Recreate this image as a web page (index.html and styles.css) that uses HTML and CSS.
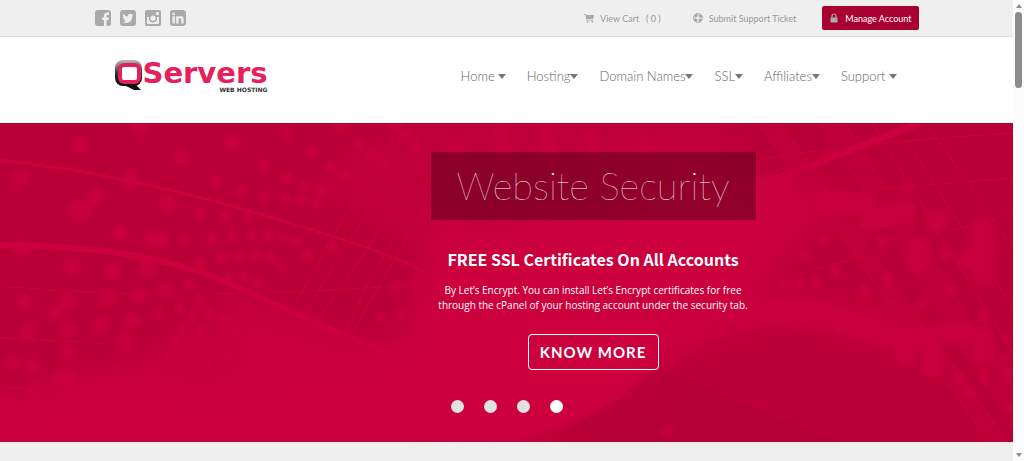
FILE: index.html
```html
<!DOCTYPE html>
<html lang="en">
<head>
  <meta charset="utf-8">
  <title>QServers Web Hosting</title>
  <link rel="stylesheet" href="styles.css">
</head>
<body>
  <div class="page">
    <div class="topbar">
      <div class="container topbar-inner">
        <div class="social">
          <a href="#" aria-label="Facebook">
            <svg viewBox="0 0 16 16"><rect width="16" height="16" rx="3" fill="#aaa"/><path d="M9 16V10H7V7.600h2V6c0-2.300 1.200-3.500 3.200-3.500h1.800v2.400h-1.200c-.9 0-1.200.4-1.200 1.200v1.500H14L13.600 10h-2v6z" fill="#efefef"/></svg>
          </a>
          <a href="#" aria-label="Twitter">
            <svg viewBox="0 0 16 16"><rect width="16" height="16" rx="3" fill="#aaa"/><path d="M13.500 4.700l-1.200.4.9-1.200-1.400.5a2.300 2.300 0 0 0-3.900 2.100C6 6.400 4.400 5.500 3.200 4.100c-.6 1.100-.3 2.400.7 3.100l-1-.3c0 1.100.8 2 1.800 2.300l-1 .1c.3.900 1.100 1.500 2.100 1.600-1 .8-2.100 1.100-3.300 1 4.800 2.700 9.900-.5 9.800-6z" fill="#efefef"/></svg>
          </a>
          <a href="#" aria-label="Instagram">
            <svg viewBox="0 0 16 16"><rect width="16" height="16" rx="2" fill="#aaa"/><path d="M2 7h2.300a4 4 0 1 0 7.400 0H14v6.200c0 .5-.3.800-.8.800H2.800c-.5 0-.8-.3-.8-.8z" fill="#efefef"/><circle cx="8" cy="8.200" r="3.900" fill="#aaa"/><circle cx="8" cy="8.200" r="2.600" fill="#efefef"/><rect x="11" y="2" width="3" height="3" rx=".6" fill="#efefef"/></svg>
          </a>
          <a href="#" aria-label="LinkedIn">
            <svg viewBox="0 0 16 16"><rect width="16" height="16" rx="3" fill="#aaa"/><circle cx="3.700" cy="3.900" r="1.300" fill="#efefef"/><path d="M2.500 6.200h2.400v7.200H2.500zM6.200 6.200h2.400v1c1.200-1.800 5-1.500 5 2v4.200h-2.400V9.600c0-2-2.600-1.900-2.600 0v3.800H6.200z" fill="#efefef"/></svg>
          </a>
        </div>
        <div class="tools">
          <a class="tool" href="#">
            <svg viewBox="0 0 10 10"><path d="M0 1h1.900l.3 1H10L9.200 6H3.200l.2.800H9v.8H2.600L1.300 1.800H0z"/><circle cx="3.500" cy="8.700" r=".9"/><circle cx="8.300" cy="8.700" r=".9"/></svg>
            <span>View Cart &nbsp; ( 0 )</span>
          </a>
          <a class="tool" href="#">
            <svg viewBox="0 0 10 10"><circle cx="5" cy="5" r="3.400" fill="none" stroke="#aaa" stroke-width="2.600" stroke-dasharray="3.200 2.140" stroke-dashoffset="-1.100"/><circle cx="5" cy="5" r="4.500" fill="none" stroke="#aaa" stroke-width=".9"/><circle cx="5" cy="5" r="2.300" fill="none" stroke="#aaa" stroke-width=".8"/></svg>
            <span>Submit Support Ticket</span>
          </a>
          <a class="manage" href="#">
            <svg viewBox="0 0 10 10"><rect x="1.500" y="4.500" width="7" height="5" rx=".5"/><path d="M3 5V3a2 2 0 0 1 4 0v2" fill="none" stroke="#aaa" stroke-width="1.200"/></svg>
            <span>Manage Account</span>
          </a>
        </div>
      </div>
    </div>

    <header class="header">
      <div class="container header-inner">
        <a class="logo" href="#" aria-label="QServers Web Hosting">
          <svg class="logo-mark" viewBox="0 0 28 31">
            <defs>
              <linearGradient id="shade" x1="0" y1="0" x2="0" y2="1">
                <stop offset="0" stop-color="#bbb"/>
                <stop offset=".5" stop-color="#333"/>
                <stop offset="1" stop-color="#000"/>
              </linearGradient>
            </defs>
            <rect width="27" height="26" rx="8" fill="url(#shade)"/>
            <path d="M9 25h12l5 5H19z" fill="#111"/>
            <rect x="5" y="5" width="19" height="17" rx="4" fill="#fff" stroke="#e5205a" stroke-width="4"/>
          </svg>
          <span class="logo-text">
            <span class="logo-name">Servers</span>
            <span class="logo-sub">WEB HOSTING</span>
          </span>
        </a>
        <nav class="nav">
          <a href="#">Home <i class="caret spaced"></i></a>
          <a href="#">Hosting<i class="caret"></i></a>
          <a href="#">Domain Names<i class="caret"></i></a>
          <a href="#">SSL<i class="caret"></i></a>
          <a href="#">Affiliates<i class="caret"></i></a>
          <a href="#">Support <i class="caret spaced"></i></a>
        </nav>
      </div>
    </header>

    <section class="hero">
      <svg class="hero-bg" viewBox="0 0 1013 319" preserveAspectRatio="xMidYMid slice" aria-hidden="true">
        <defs>
          <filter id="soft" x="-20%" y="-20%" width="140%" height="140%"><feGaussianBlur stdDeviation="2"/></filter>
          <filter id="softer" x="-20%" y="-20%" width="140%" height="140%"><feGaussianBlur stdDeviation="14"/></filter>
        </defs>
        <rect width="1013" height="319" fill="#b90036"/>
        <!-- bright middle and lower left -->
        <g fill="#cb003c" filter="url(#softer)">
          <path d="M-40 290L60 255 130 240 200 262 290 245 400 215 420 150 430 90 480 105 620 80 640 30 740 50 850 75 800 120 760 165 740 215 700 230 660 270 560 340-40 360z"/>
          <path d="M740 170L850 180 930 205 900 222 800 205 740 215z"/>
          <path d="M240 172L390 230 420 250 200 280 130 240z" opacity=".7"/>
          <path d="M300 60L420-10H720L760 60 640 90 400 120z" opacity=".4"/>
          <path d="M235 165C300 190 350 215 390 232L430 210V319H240z" opacity=".5"/>
        </g>
        <path d="M700 205C760 195 810 205 860 222C930 260 960 300 975 319H520L640 270C670 245 690 225 740 208z" fill="#b90036" opacity=".55" filter="url(#soft)"/>
        <path d="M660 240L740 280 840 319H545L620 275z" fill="#b20034" opacity=".5"/>
        <path d="M640 235L740 281 840 319H990L905 222 740 205z" fill="#c1003a" opacity=".25"/>
        <!-- light bands -->
        <g fill="none" stroke="#cb003c">
          <path d="M0 37Q120 50 260 91T430 152" stroke-width="3"/>
          <path d="M0 122Q150 122 240 165T390 230" stroke-width="6"/>
          <path d="M0 163Q130 175 260 170T430 160M0 215Q160 225 330 221T430 212M0 265H330" stroke-width="1"/>
          <path d="M403 0Q330 110 260 250M425 8Q350 110 300 200M428 30Q350 160 240 300M430 55Q370 150 340 220M430 75L352 210" stroke-width="2" opacity=".6"/>
          <path d="M760 62L920 0" stroke-width="7"/>
          <path d="M740 40Q850 20 1013 10M740 15L775 0M760 160L850 137 1013 90M890 170Q950 155 1013 120M880 66L1013 55M740 65Q800 35 840 28" stroke-width="1"/>
          <path d="M758 0L990 319M780 0L1008 319M820 0L1013 305M845 0L1013 265M872 0L1013 230M905 15L1013 185M930 5L1013 125" stroke-width="2" opacity=".5"/>
        </g>
        <path d="M758 0H780L1008 319H988z" fill="#cb003c" opacity=".3"/>
        <path d="M820 0H845L1013 265V305z" fill="#cb003c" opacity=".2"/>
        <!-- glowing dots -->
        <g fill="none" stroke="#cb003c" stroke-linecap="round" filter="url(#soft)" opacity=".85">
          <path stroke-width="17" d="M80 23h0M21 55h0M140 3h0M182 34h0M233 20h0M130 56h0M77 87h8M95 74h0M120 110h0M153 117h8M167 81h0M72 144h0M113 148h0M22 125h0M147 145h0M25 179h0M68 179h0M108 175h0M138 172h0M166 168h0M102 202h0M132 198h0M68 207h0M27 209h0M67 229h0M125 219h0M55 190h0M12 240h0M32 243h0M35 270h0M8 280h0M33 300h0M60 255h8"/>
          <path stroke-width="12" d="M263 42h0M215 58h0M242 68h0M265 74h0M285 75h0M302 77h0M316 80h0M286 55h0M305 63h0M321 67h0M287 10h0M312 30h0M330 44h0M345 52h0M358 20h0M373 32h0M385 42h0M340 4h0M405 12h0M417 24h0M395 2h0M200 90h0M226 93h0M248 93h0M185 117h0M211 115h0M233 113h0M252 112h0M269 112h0M283 115h0M296 119h0M200 139h0M221 135h0M239 134h0M255 134h0M270 135h0M282 144h0M307 132h0M332 123h0M243 153h0M258 160h0M228 154h0M189 162h0M199 178h0M180 185h0M192 193h0M208 190h0M223 198h0M200 208h0M183 205h0M177 219h0M192 226h0M214 220h0M237 210h0M158 191h0M170 233h0M207 240h0M228 234h0M184 245h0M249 230h0M380 195h0M400 192h0M422 190h0M396 164h0M418 162h0M432 92h0M458 91h0M483 91h0M507 91h0M532 90h0M557 92h0M583 95h0"/>
          <path stroke-width="13" d="M908 64h0M778 87h0M823 117h0M805 133h0M775 124h0M835 148h0M816 159h0M799 161h0M783 162h0M882 119h0M887 156h0M865 168h0M922 180h0M950 167h0M946 131h0M983 194h0M970 270h0M667 308h0M984 255h0M1008 250h0M958 256h0"/>
          <path stroke-width="22" d="M937 99h0M918 125v15M983 105v45M970 135h0M870 98L905 88M760 65h28M825 80h40M950 210h16M983 215v15M932 230v15M905 232h0M880 208h0"/>
          <path stroke-width="20" d="M745 195Q800 175 850 200T945 210"/>
          <path stroke-width="10" d="M700 212h0M722 209h0M740 206h0M757 202h0M775 199h0M795 200h0M815 203h0M840 207h0M865 213h0M1006 215h0M1005 235h0M1010 285h0"/>
          <path stroke-width="16" opacity=".5" d="M500 10L512 60M545 10L558 60M590 15L605 60M640 20L655 55M455 20L470 65"/>
        </g>
      </svg>
      <div class="container">
        <div class="slide">
          <h1>Website Security</h1>
          <h2>FREE SSL Certificates On All Accounts</h2>
          <p>By Let’s Encrypt. You can install Let’s Encrypt certificates for free through the cPanel of your hosting account under the security tab.</p>
          <a class="more" href="#">KNOW MORE</a>
          <div class="dots">
            <button type="button" aria-label="Slide 1"></button>
            <button type="button" aria-label="Slide 2"></button>
            <button type="button" aria-label="Slide 3"></button>
            <button type="button" class="active" aria-label="Slide 4"></button>
          </div>
        </div>
      </div>
    </section>
  </div>

  <div class="scrollbar" aria-hidden="true">
    <i class="arrow-up"></i>
    <i class="thumb"></i>
    <i class="arrow-down"></i>
  </div>
</body>
</html>
```
FILE: styles.css
```css
* {
  box-sizing: border-box;
  margin: 0;
  padding: 0;
}
body {
  display: flex;
  min-height: 100vh;
  background-color: #efefef;
  font-family: Lato, sans-serif;
}
a {
  color: inherit;
  text-decoration: none;
}
svg {
  display: block;
}
.page {
  flex: 1;
  min-width: 0;
}
.container {
  max-width: 824px;
  margin: 0 auto;
}

/* top bar */
.topbar {
  background-color: #efefef;
  border-bottom: 1px solid #ddd;
}
.topbar-inner {
  display: flex;
  justify-content: space-between;
  align-items: center;
  height: 36px;
}
.social {
  display: flex;
  gap: 9px;
}
.social svg {
  width: 16px;
  height: 16px;
}
.tools {
  display: flex;
  align-items: center;
  font-size: 9px;
  color: #999;
}
.tool {
  display: flex;
  align-items: center;
  gap: 6px;
  margin-right: 32px;
}
.tool + .manage {
  margin-left: -6px;
}
.tools svg {
  width: 10px;
  height: 10px;
  fill: #aaa;
}
.manage {
  display: flex;
  align-items: center;
  gap: 6px;
  height: 24px;
  padding: 0 7px;
  border-radius: 2px;
  background-color: #a80030;
  color: #fff;
}

/* header */
.header {
  background-color: #fff;
}
.header-inner {
  display: flex;
  justify-content: space-between;
  align-items: center;
  height: 86px;
  padding: 0 22px 8px 20px;
}
.logo {
  display: flex;
  align-items: flex-start;
}
.logo-mark {
  width: 28px;
  height: 31px;
}
.logo-text {
  display: flex;
  flex-direction: column;
  align-items: flex-end;
  font-family: "DejaVu Sans", sans-serif;
}
.logo-name {
  font-size: 29px;
  font-weight: bold;
  line-height: 27px;
  color: #e5205a;
}
.logo-sub {
  font-size: 6px;
  font-weight: bold;
  line-height: 6px;
  color: #333;
}
.nav {
  display: flex;
  gap: 21px;
  font-size: 13px;
  font-weight: 300;
  color: #666;
}
.nav a {
  display: flex;
  align-items: center;
}
.caret {
  border: 4px solid transparent;
  border-top: 5px solid #777;
  border-bottom: 0;
}
.caret.spaced {
  margin-left: 3px;
}

/* slider */
.hero {
  position: relative;
  padding: 29px 0;
  background-color: #cb003c;
  color: #fff;
}
.hero-bg {
  position: absolute;
  top: 0;
  left: 0;
  width: 100%;
  height: 100%;
}
.slide {
  position: relative;
  width: 325px;
  margin-left: 336px;
  text-align: center;
}
.slide h1 {
  padding-bottom: 2px;
  background-color: rgba(0, 0, 0, 0.28);
  font-size: 38px;
  font-weight: 100;
  line-height: 66px;
}
.slide h2 {
  margin-top: 27px;
  font-family: "Noto Sans CJK SC", sans-serif;
  font-size: 16px;
  font-weight: 700;
  line-height: 24px;
}
.slide p {
  margin-top: 12px;
  font-family: "Open Sans", sans-serif;
  font-size: 10px;
  line-height: 15px;
}
.more {
  display: block;
  width: 131px;
  margin: 21px auto 0;
  border: 1px solid #fff;
  border-radius: 4px;
  font-size: 15px;
  font-weight: 700;
  line-height: 34px;
  letter-spacing: 1px;
}
.dots {
  display: flex;
  gap: 20px;
  margin: 30px 0 0 20px;
}
.dots button {
  width: 13px;
  height: 13px;
  border: 0;
  border-radius: 50%;
  background-color: #e2e2e2;
}
.dots .active {
  background-color: #fff;
}

/* scroll track */
.scrollbar {
  display: flex;
  flex-direction: column;
  align-items: center;
  width: 11px;
  padding: 4px 0;
  background-color: #fcfcfc;
}
.thumb {
  width: 7px;
  height: 76px;
  margin-top: 4px;
  border-radius: 4px;
  background-color: #8b8b8b;
}
.arrow-up {
  border: 3px solid transparent;
  border-top: 0;
  border-bottom: 4px solid #8b8b8b;
}
.arrow-down {
  margin-top: auto;
  border: 3px solid transparent;
  border-top: 4px solid #8b8b8b;
  border-bottom: 0;
}
```
